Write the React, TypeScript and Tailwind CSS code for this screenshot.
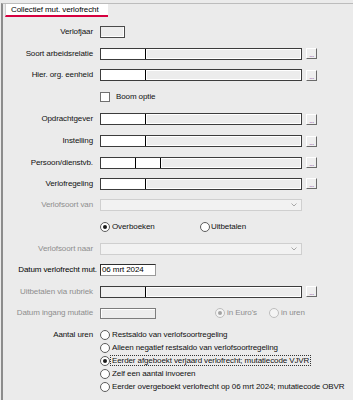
import React from "react";

const FONT = "font-['Liberation_Sans',Arial,sans-serif]";

function Dots() {
  return (
    <div className="ml-[4px] w-[11px] h-[11px] bg-[#efefef] border-t border-l border-t-white border-l-white border-b border-r border-b-[#6a6a6a] border-r-[#6a6a6a] flex items-end justify-center pb-[1px]">
      <span className="text-[7px] leading-[5px] tracking-[-0.5px] text-[#8a4a9a]">...</span>
    </div>
  );
}

function LookupField({ persoon, disabled }: { persoon?: boolean; disabled?: boolean }) {
  const first = disabled ? "bg-[#f0f0f0]" : "bg-white";
  return (
    <div className="flex items-center">
      <div className="flex w-[202px] h-[12px] border border-[#3c3c3c]">
        {persoon ? (
          <>
            <div className={`w-[35px] h-full border-r border-black ${first}`} />
            <div className={`w-[25px] h-full border-r border-black ${first}`} />
          </>
        ) : (
          <div className={`w-[45px] h-full border-r border-black ${first}`} />
        )}
        <div className="flex-1 h-full bg-[#ececec] shadow-[inset_1px_1px_0_#fff,inset_-1px_-1px_0_#fff]" />
      </div>
      <Dots />
    </div>
  );
}

function Select() {
  return (
    <div className="w-[202px] h-[12px] bg-[#f2f2f2] border border-[#cfcfcf] flex items-center justify-end pr-[4px]">
      <svg width="6" height="4" viewBox="0 0 6 4">
        <path d="M0.5 0.5 L3 3 L5.5 0.5" fill="none" stroke="#a8a8a8" strokeWidth="1" />
      </svg>
    </div>
  );
}

function Radio({ checked, disabled }: { checked?: boolean; disabled?: boolean }) {
  return (
    <div
      className={`w-[10px] h-[10px] rounded-full border flex items-center justify-center shrink-0 ${
        disabled ? "border-[#bdbdbd] bg-[#f4f4f4]" : "border-[#5c5c5c] bg-white"
      }`}
    >
      {checked ? (
        <div className={`w-[4px] h-[4px] rounded-full ${disabled ? "bg-[#a3a3a3]" : "bg-[#1a1a1a]"}`} />
      ) : null}
    </div>
  );
}

function Row({
  h,
  label,
  tone = "normal",
  children,
}: {
  h: string;
  label?: string;
  tone?: "normal" | "disabled" | "dark";
  children?: React.ReactNode;
}) {
  const color =
    tone === "disabled" ? "text-[#8e8e8e]" : tone === "dark" ? "text-black mr-[-4px]" : "text-[#111]";
  return (
    <div className={`flex items-center ${h}`}>
      <div className="w-[90px] flex justify-end">
        <span className={`whitespace-nowrap leading-none ${color}`}>{label}</span>
      </div>
      <div className="ml-[7px] flex items-center">{children}</div>
    </div>
  );
}

const options = [
  "Restsaldo van verlofsoortregeling",
  "Alleen negatief restsaldo van verlofsoortregeling",
  "Eerder afgeboekt verjaard verlofrecht; mutatiecode VJVR",
  "Zelf een aantal invoeren",
  "Eerder overgeboekt verlofrecht op 06 mrt 2024; mutatiecode OBVR",
];

export default function App() {
  return (
    <div className={`w-[353px] h-[400px] bg-[#ebebeb] overflow-hidden text-[8px] tracking-[-0.1px] ${FONT}`}>
      <div className="mt-[3px] ml-[1px] h-[397px] border-t border-l-2 border-t-[#bcbcbc] border-l-[#8c8c8c]">
        <div className="ml-[2px] w-[103px] h-[13px] bg-white border-l border-l-[#d0d0d0] border-b-2 border-b-[#d6003f] pl-[5px] flex items-center">
          <span className="leading-none text-black whitespace-nowrap">Collectief mut. verlofrecht</span>
        </div>

        <div className="mt-[4px] flex flex-col">
          <Row h="h-[22px]" label="Verlofjaar">
            <div className="w-[25px] h-[12px] border border-[#4a4a4a] bg-[#ececec] shadow-[inset_-1px_-1px_0_#fff]" />
          </Row>
          <Row h="h-[21px]" label="Soort arbeidsrelatie">
            <LookupField />
          </Row>
          <Row h="h-[22px]" label="Hier. org. eenheid">
            <LookupField />
          </Row>
          <Row h="h-[22px]">
            <div className="w-[10px] h-[10px] bg-white border border-[#707070]" />
            <span className="ml-[6px] leading-none text-[#111]">Boom optie</span>
          </Row>
          <Row h="h-[22px]" label="Opdrachtgever">
            <LookupField />
          </Row>
          <Row h="h-[22px]" label="Instelling">
            <LookupField />
          </Row>
          <Row h="h-[21px]" label="Persoon/dienstvb.">
            <LookupField persoon />
          </Row>
          <Row h="h-[21px]" label="Verlofregeling">
            <LookupField />
          </Row>
          <Row h="h-[22px]" label="Verlofsoort van" tone="disabled">
            <Select />
          </Row>
          <Row h="h-[22px]">
            <div className="flex items-center w-[100px]">
              <Radio checked />
              <span className="ml-[2px] leading-none text-[#111]">Overboeken</span>
            </div>
            <div className="flex items-center">
              <Radio />
              <span className="ml-[1px] leading-none text-[#111]">Uitbetalen</span>
            </div>
          </Row>
          <Row h="h-[21px]" label="Verlofsoort naar" tone="disabled">
            <Select />
          </Row>
          <Row h="h-[22px]" label="Datum verlofrecht mut." tone="dark">
            <div className="w-[56px] h-[12px] bg-white border border-[#2e2e2e] border-b-[#9a9a9a] border-r-[#9a9a9a] flex items-center pl-[1px]">
              <span className="leading-none text-black">06 mrt 2024</span>
            </div>
          </Row>
          <Row h="h-[21px]" label="Uitbetalen via rubriek" tone="disabled">
            <LookupField disabled />
          </Row>
          <Row h="h-[22px]" label="Datum ingang mutatie" tone="disabled">
            <div className="w-[56px] h-[11px] border border-[#7c7c7c] bg-[#ececec] shadow-[inset_1px_1px_0_#fff]" />
            <div className="ml-[59px] flex items-center">
              <Radio checked disabled />
              <span className="ml-[2px] leading-none text-[#8e8e8e]">in Euro's</span>
            </div>
            <div className="ml-[12px] flex items-center">
              <Radio disabled />
              <span className="ml-[2px] leading-none text-[#8e8e8e]">in uren</span>
            </div>
          </Row>

          <div className="mt-[4px] flex">
            <div className="w-[90px] h-[13px] flex items-center justify-end">
              <span className="leading-none text-[#111]">Aantal uren</span>
            </div>
            <div className="ml-[7px] flex flex-col">
              {options.map((o, i) => (
                <div key={o} className="h-[13px] flex items-center">
                  <Radio checked={i === 2} />
                  <span
                    className={`ml-[1px] px-[1px] leading-[9px] whitespace-nowrap text-[#111] ${
                      i === 2 ? "outline outline-1 outline-dotted outline-[#333]" : ""
                    }`}
                  >
                    {o}
                  </span>
                </div>
              ))}
            </div>
          </div>
        </div>
      </div>
    </div>
  );
}
